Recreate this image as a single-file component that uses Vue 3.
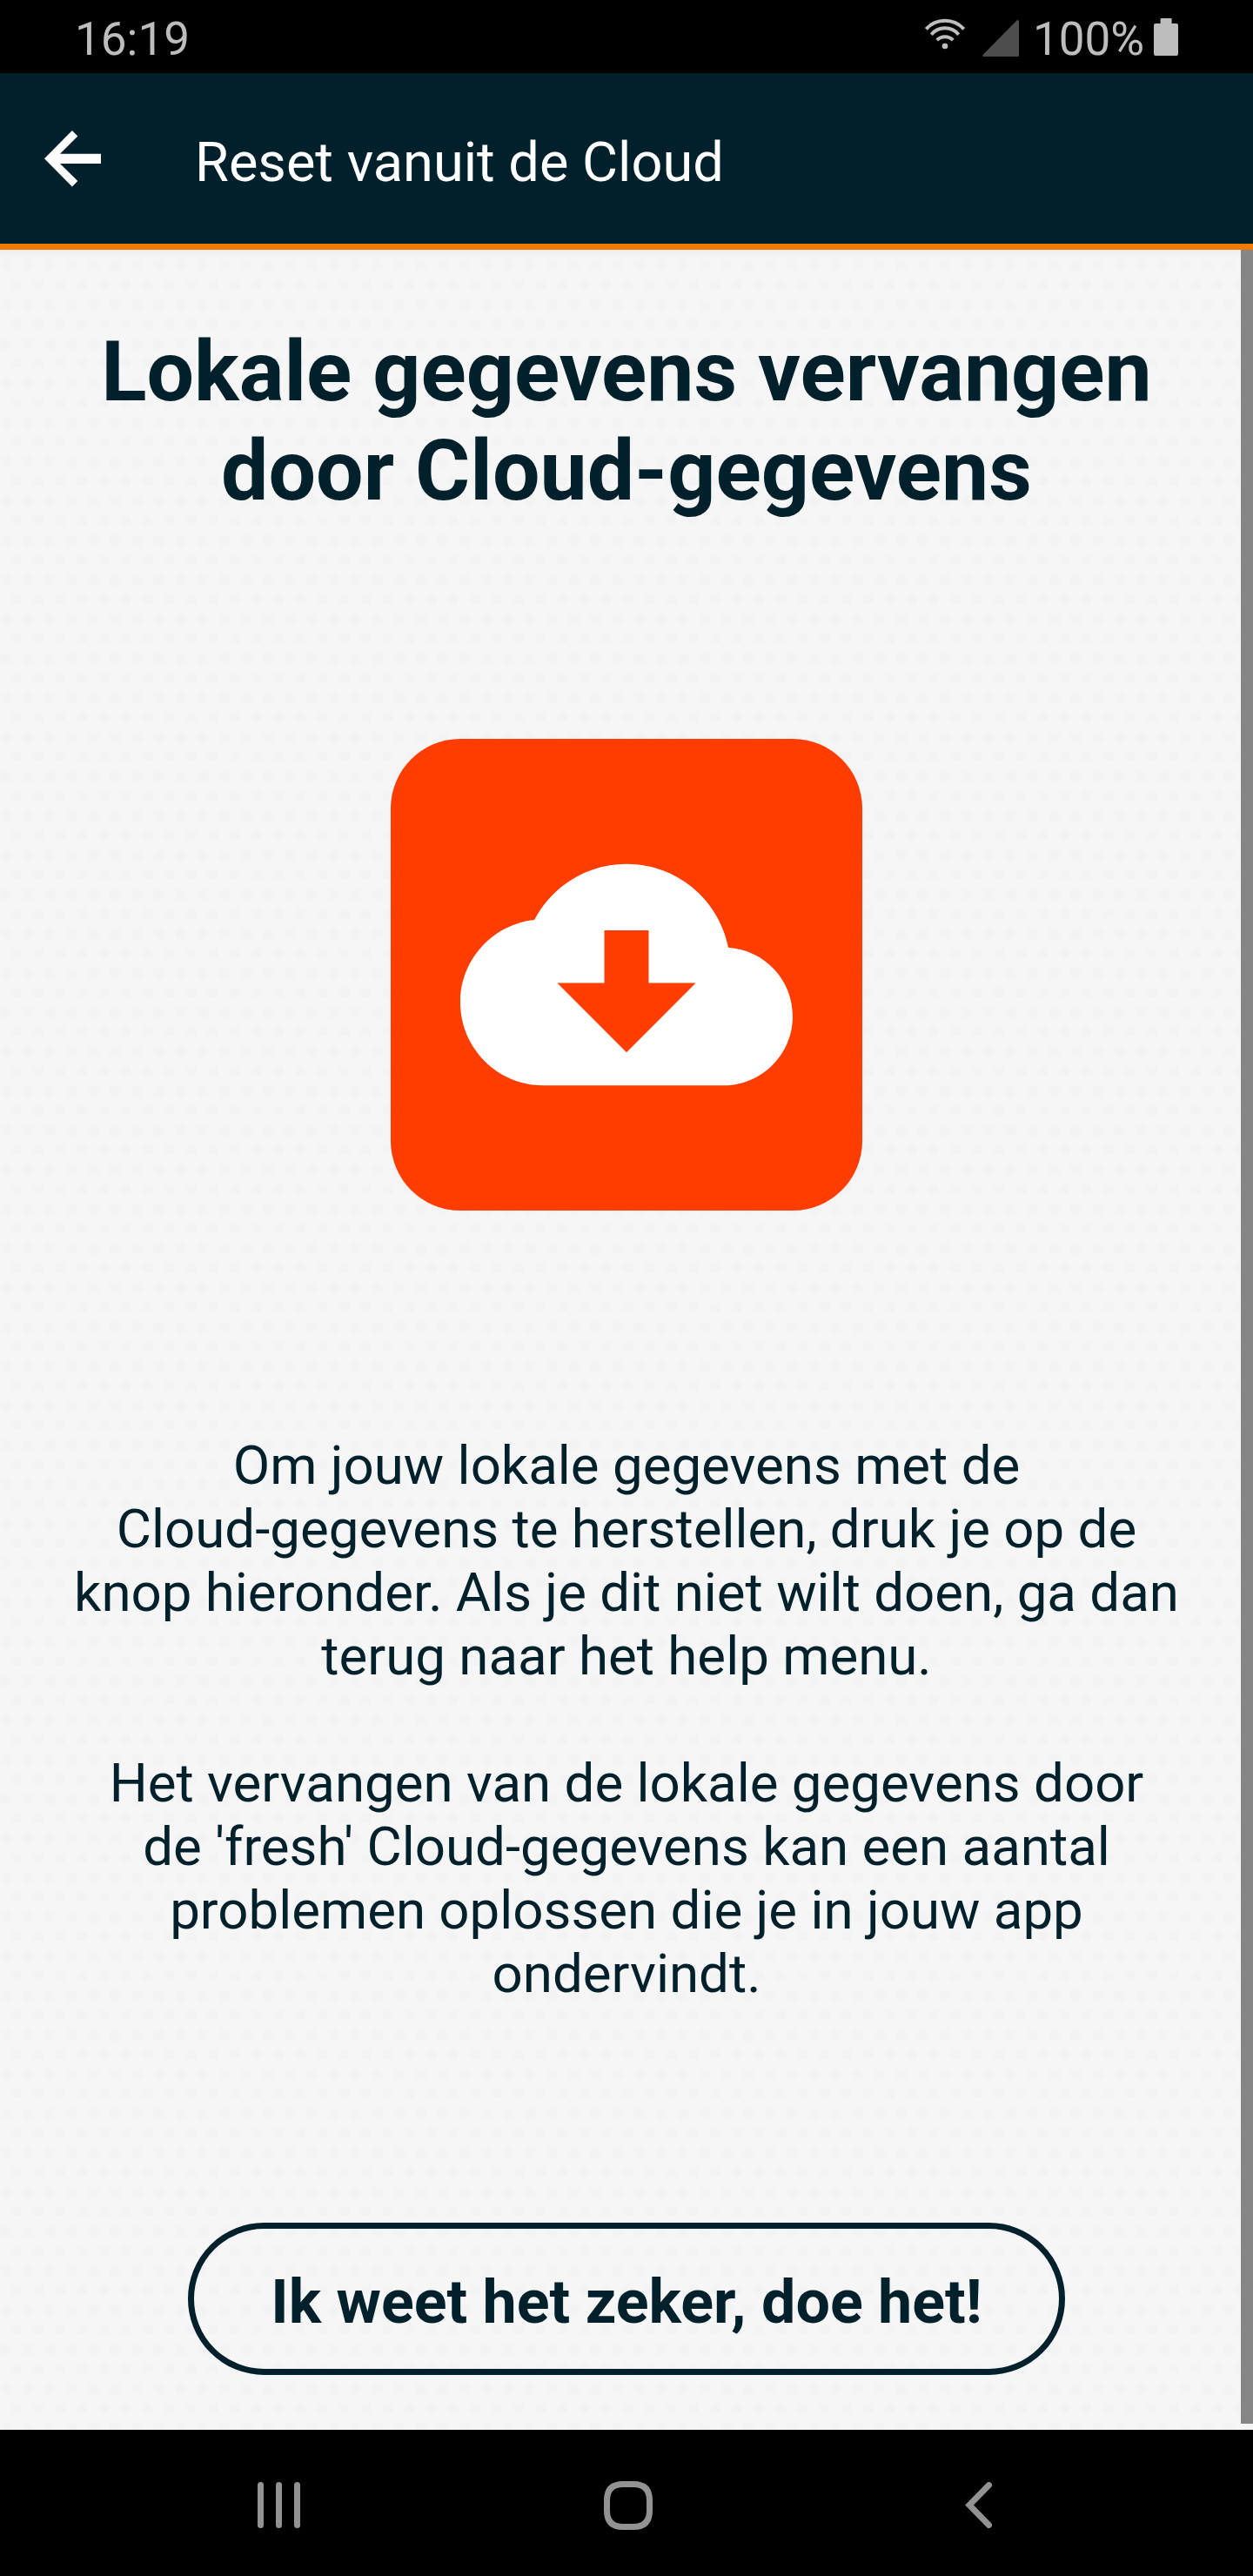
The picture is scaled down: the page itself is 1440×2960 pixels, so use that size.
<script setup>
const title = 'Reset vanuit de Cloud'
const batteryLevel = 100
</script>

<template>
  <div class="screen">
    <div class="status">
      <span class="clock">16:19</span>
      <div class="indicators">
        <svg class="wifi" width="48" height="36" viewBox="0 0 48 36" fill="none" stroke="#bdbdbd" stroke-width="4">
          <path d="M2.3 12.3A29.5 29.5 0 0 1 45.7 12.3" />
          <path d="M8.3 18.8A20.3 20.3 0 0 1 39.7 18.8" />
          <path d="M14.8 25.2A12.8 12.8 0 0 1 33.2 25.2" />
          <circle cx="24" cy="32" r="3.3" fill="#bdbdbd" stroke="none" />
        </svg>
        <svg class="signal" width="42" height="42" viewBox="0 0 42 42">
          <path d="M1.3 39.2 39 1Q39.7 0 40.5 0 42 0 42 1.5V40.5Q42 42 40.5 42H1.5Q-.7 41.5 1.3 39.2Z" fill="#4d4d4d" />
        </svg>
        <span class="percent">{{ batteryLevel }}%</span>
        <svg class="battery" width="28" height="43" viewBox="0 0 28 43" fill="#bdbdbd">
          <rect x="7.6" y="0" width="13" height="10" rx="1" />
          <rect x="0" y="6" width="28" height="37" rx="2" />
        </svg>
      </div>
    </div>

    <header class="toolbar">
      <svg class="back" width="65" height="65" viewBox="0 0 65 65" fill="#fff">
        <path d="M0 32.3 31.9 0 38.3 6.6 18 26.7H65V38H18L38.3 58 31.9 64.6Z" />
      </svg>
      <span class="title">{{ title }}</span>
    </header>

    <main class="content">
      <h1>Lokale gegevens vervangen<br />door Cloud-gegevens</h1>
      <div class="tile">
        <svg width="382" height="382" viewBox="0 0 24 24">
          <path fill="#fff" d="M19.35 10.04C18.67 6.59 15.64 4 12 4 9.11 4 6.6 5.64 5.35 8.04 2.34 8.36 0 10.91 0 14c0 3.31 2.69 6 6 6h13c2.76 0 5-2.24 5-5 0-2.64-2.05-4.78-4.65-4.96z" />
          <path fill="#ff3d00" d="M17 12.6l-5 5-5-5h3.4V8.8h3.2v3.8z" />
        </svg>
      </div>
      <div class="copy">
        <p>Om jouw lokale gegevens met de<br />Cloud-gegevens te herstellen, druk je op de<br />knop hieronder. Als je dit niet wilt doen, ga dan<br />terug naar het help menu.</p>
        <p>Het vervangen van de lokale gegevens door<br />de 'fresh' Cloud-gegevens kan een aantal<br />problemen oplossen die je in jouw app<br />ondervindt.</p>
      </div>
      <button class="confirm">Ik weet het zeker, doe het!</button>
      <div class="scrollbar"></div>
    </main>

    <nav class="navbar">
      <svg width="50" height="53" viewBox="0 0 50 53" fill="#929292">
        <rect x="0" y="0" width="7" height="53" rx="3.5" />
        <rect x="21" y="0" width="7" height="53" rx="3.5" />
        <rect x="42" y="0" width="7" height="53" rx="3.5" />
      </svg>
      <svg width="56" height="56" viewBox="0 0 56 56" fill="none" stroke="#929292" stroke-width="7">
        <path d="M22 3.5H34Q52.5 3.5 52.5 22V34Q52.5 52.5 34 52.5H22Q3.5 52.5 3.5 34V22Q3.5 3.5 22 3.5Z" />
      </svg>
      <svg width="32" height="53" viewBox="0 0 32 53" fill="none" stroke="#929292" stroke-width="7" stroke-linecap="round">
        <path d="M27.5 3.5 5 26.5 27.5 49.5" />
      </svg>
    </nav>
  </div>
</template>

<style>
body {
  margin: 0;
  background: #000;
}
</style>

<style scoped>
.screen {
  width: 1440px;
  height: 2960px;
  display: flex;
  flex-direction: column;
  overflow: hidden;
  font-family: Roboto, sans-serif;
  color: #00212b;
}

.status {
  box-sizing: border-box;
  height: 84px;
  flex: none;
  display: flex;
  justify-content: space-between;
  padding: 0 86px 0 86px;
  background: #000;
  color: #bdbdbd;
  font-size: 53px;
  line-height: 62px;
}

.clock,
.percent {
  margin-top: 14px;
}

.indicators {
  display: flex;
  align-items: flex-start;
}

.wifi {
  margin: 21px 19px 0 0;
}

.signal {
  margin: 23px 16px 0 0;
}

.percent {
  width: 139px;
}

.battery {
  margin-top: 21px;
}

.toolbar {
  box-sizing: border-box;
  height: 196px;
  flex: none;
  display: flex;
  align-items: center;
  padding-left: 51px;
  background: #00212b;
}

.title {
  margin-left: 108px;
  padding-top: 7px;
  color: #fff;
  font-size: 63.1px;
  line-height: 74px;
}

.content {
  position: relative;
  box-sizing: border-box;
  height: 2512px;
  flex: none;
  display: flex;
  flex-direction: column;
  align-items: center;
  border-top: 7px solid #f27a00;
  background-color: #f6f6f6;
  background-image:
    linear-gradient(rgba(0, 0, 0, 0.035), rgba(0, 0, 0, 0) 12px),
    radial-gradient(circle at 7px 18px, #f3f3f3 4px, rgba(243, 243, 243, 0) 9px),
    radial-gradient(circle at 19.5px 40.7px, #f3f3f3 4px, rgba(243, 243, 243, 0) 9px);
  background-size: 100% 100%, 25.1px 45.2px, 25.1px 45.2px;
  background-repeat: no-repeat, repeat, repeat;
}

h1 {
  margin: 83px 0 0;
  font-size: 96.7px;
  font-weight: 700;
  line-height: 114px;
  text-align: center;
}

.tile {
  width: 542px;
  height: 542px;
  flex: none;
  display: flex;
  align-items: center;
  justify-content: center;
  margin-top: 251px;
  border-radius: 80px;
  background: #ff3d00;
}

.copy {
  display: flex;
  flex-direction: column;
  gap: 73px;
  margin-top: 257px;
  font-size: 61.8px;
  line-height: 73px;
  text-align: center;
  white-space: nowrap;
}

.copy p {
  margin: 0;
}

.confirm {
  box-sizing: border-box;
  width: 1008px;
  height: 175px;
  flex: none;
  margin-top: 249px;
  padding: 7px 0 0;
  border: 7px solid #00212b;
  border-radius: 88px;
  background: transparent;
  color: #00212b;
  font: 700 70px/82px Roboto, sans-serif;
}

.scrollbar {
  position: absolute;
  top: 0;
  right: 0;
  width: 14px;
  height: 2498px;
  background: #868686;
}

.navbar {
  box-sizing: border-box;
  height: 168px;
  flex: none;
  display: flex;
  align-items: center;
  padding: 5px 0 0 296px;
  background: #000;
}

.navbar svg:nth-child(2) {
  margin: 0 359px 0 348px;
}
</style>
